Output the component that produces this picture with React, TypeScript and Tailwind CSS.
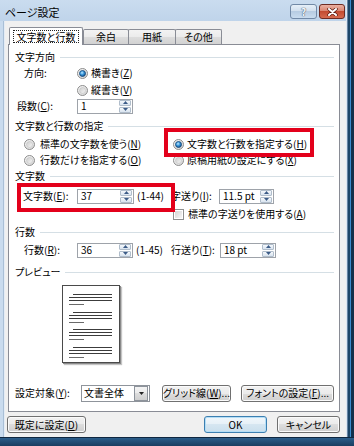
import React from "react";

const U = ({ k }: { k: string }) => <span className="underline underline-offset-1">{k}</span>;

function Radio({ checked }: { checked?: boolean }) {
  return (
    <svg width="11" height="11" viewBox="0 0 11 11" className="shrink-0 block">
      <defs>
        <linearGradient id="rOuter" x1="0" y1="0" x2="1" y2="1">
          <stop offset="0" stopColor="#fbfbfb" />
          <stop offset="1" stopColor="#d2d2d2" />
        </linearGradient>
        <linearGradient id="rInner" x1="0" y1="0" x2="1" y2="1">
          <stop offset="0" stopColor="#cdcdcd" />
          <stop offset="1" stopColor="#f6f6f6" />
        </linearGradient>
        <radialGradient id="rDot" cx="0.42" cy="0.38" r="0.65">
          <stop offset="0" stopColor="#c6ebff" />
          <stop offset="0.45" stopColor="#3f9de0" />
          <stop offset="1" stopColor="#0b4a86" />
        </radialGradient>
      </defs>
      <circle cx="5.5" cy="5.5" r="5" fill="url(#rOuter)" stroke="#8d8d8d" strokeWidth="1" />
      {checked ? (
        <circle cx="5.5" cy="5.5" r="3" fill="url(#rDot)" stroke="#174878" strokeWidth="0.8" />
      ) : (
        <circle cx="5.5" cy="5.5" r="3" fill="url(#rInner)" stroke="#c2c2c2" strokeWidth="0.6" />
      )}
    </svg>
  );
}

function Check() {
  return (
    <div className="w-[11px] h-[11px] shrink-0 border border-[#8e8f8f] bg-white p-[1px]">
      <div className="w-full h-full bg-gradient-to-br from-[#d4d4d4] to-[#f7f7f7]" />
    </div>
  );
}

function Spin() {
  return (
    <div className="flex flex-col w-[12px] mr-px gap-px shrink-0">
      <div className="flex-1 flex items-center justify-center bg-gradient-to-b from-[#f6f9fc] to-[#d8e3ef] border border-[#b0bdcb] rounded-[1px]">
        <svg width="5" height="3" viewBox="0 0 5 3" className="block">
          <path d="M0 3 L2.5 0 L5 3 Z" fill="#3b5b87" />
        </svg>
      </div>
      <div className="flex-1 flex items-center justify-center bg-gradient-to-b from-[#f6f9fc] to-[#d8e3ef] border border-[#b0bdcb] rounded-[1px]">
        <svg width="5" height="3" viewBox="0 0 5 3" className="block">
          <path d="M0 0 L2.5 3 L5 0 Z" fill="#3b5b87" />
        </svg>
      </div>
    </div>
  );
}

function NumBox({ value, w }: { value: string; w: string }) {
  return (
    <div className={`${w} h-[15px] shrink-0 border border-[#9ea3aa] bg-white flex items-stretch py-0`}>
      <span className="flex-1 pl-[3px] flex items-center">{value}</span>
      <Spin />
    </div>
  );
}

function Group({ label }: { label: string }) {
  return (
    <div className="flex items-center h-[16px] pl-[6px] pr-[5px]">
      <span>{label}</span>
      <div className="flex-1 h-px bg-[#d5dfe5] ml-[5px]" />
    </div>
  );
}

function Btn({ children, w }: { children: React.ReactNode; w: string }) {
  return (
    <div
      className={`${w} h-[17px] shrink-0 rounded-[3px] border border-[#707070] bg-[linear-gradient(#f2f2f2_0%,#ebebeb_50%,#dddddd_50%,#cfcfcf_100%)] shadow-[inset_0_0_0_1px_#fbfbfb] flex items-center justify-center`}
    >
      {children}
    </div>
  );
}

function PreviewPara({ mt }: { mt: string }) {
  return (
    <div className={`${mt} flex flex-col`}>
      <div className="ml-[4px] w-[39px] h-px bg-[#3c3c3c]" />
      <div className="mt-[2px] w-[43px] h-px bg-[#3c3c3c]" />
      <div className="mt-[2px] w-[43px] h-px bg-[#3c3c3c]" />
      <div className="mt-[3px] w-[15px] h-px bg-[#6a6a6a]" />
    </div>
  );
}

export default function App() {
  return (
    <div className="relative w-[354px] h-[446px] overflow-hidden flex flex-col bg-[#c5d8ec] text-black text-[10px] leading-none [font-family:'Noto_Sans_CJK_JP',sans-serif] [font-feature-settings:'palt']">
      <div className="flex h-[437px]">
        <div className="w-[346px] flex flex-col">
          {/* Title bar */}
          <div className="h-[21px] shrink-0 flex items-start bg-gradient-to-b from-[#cadcef] to-[#bfd4ea]">
            <div className="pl-[5px] pt-[7px] text-[11px]">ページ設定</div>
            <div className="ml-auto mr-px mt-[4px] flex gap-[2px]">
              <div className="w-[27px] h-[15px] rounded-[3px] border border-[#7189a6] bg-[linear-gradient(#e6eff8_0%,#d2e0ee_45%,#b7cce2_50%,#c9dcef_100%)] flex items-center justify-center">
                <span className="text-[10px] font-bold text-[#f4f7fb] [text-shadow:0_0_1px_#3d4f66,0_0_1px_#3d4f66]">?</span>
              </div>
              <div className="w-[26px] h-[15px] rounded-[3px] border border-[#6e2b22] bg-[linear-gradient(#eab0a2_0%,#da8672_45%,#c34b31_50%,#d66a4e_100%)] flex items-center justify-center">
                <svg width="11" height="8" viewBox="0 0 11 8" className="block">
                  <path d="M2 1 L9 7 M9 1 L2 7" stroke="#5a1a10" strokeWidth="3.4" strokeLinecap="round" />
                  <path d="M2 1 L9 7 M9 1 L2 7" stroke="#ffffff" strokeWidth="2" strokeLinecap="round" />
                </svg>
              </div>
            </div>
          </div>

          <div className="flex flex-1 min-h-0">
            {/* left frame */}
            <div className="w-[5px] flex">
              <div className="w-[3px] bg-[#c9dbee]" />
              <div className="w-px bg-[#a9bfd6]" />
              <div className="w-px bg-[#e4ecf5]" />
            </div>
            {/* client */}
            <div className="w-[341px] bg-[#f0f0f0] flex flex-col pt-[6px] pl-[3px]">
              {/* tabs */}
              <div className="flex items-end h-[17px]">
                <div className="relative z-10 ml-px w-[74px] h-[18px] -mb-px bg-white border border-b-0 border-[#898c95] rounded-t-[2px] flex items-center justify-center">
                  <span className="border border-dotted border-[#222] px-[3px] h-[13px] flex items-center">文字数と行数</span>
                </div>
                <div className="w-[46px] h-[15px] border border-b-0 border-[#898c95] rounded-t-[2px] bg-[linear-gradient(#f3f3f3_0%,#ebebeb_50%,#dddddd_50%,#d2d2d2_100%)] flex items-center justify-center">
                  余白
                </div>
                <div className="-ml-px w-[48px] h-[15px] border border-b-0 border-[#898c95] rounded-t-[2px] bg-[linear-gradient(#f3f3f3_0%,#ebebeb_50%,#dddddd_50%,#d2d2d2_100%)] flex items-center justify-center">
                  用紙
                </div>
                <div className="-ml-px w-[47px] h-[15px] border border-b-0 border-[#898c95] rounded-t-[2px] bg-[linear-gradient(#f3f3f3_0%,#ebebeb_50%,#dddddd_50%,#d2d2d2_100%)] flex items-center justify-center">
                  その他
                </div>
              </div>

              {/* panel */}
              <div className="w-[332px] h-[368px] border border-[#898c95] bg-white flex flex-col">
                <div className="mt-[4px]">
                  <Group label="文字方向" />
                </div>
                <div className="flex items-center h-[16px]">
                  <div className="w-[68px] pl-[15px]">方向:</div>
                  <Radio checked />
                  <span className="ml-[3px]">
                    横書き(<U k="Z" />)
                  </span>
                </div>
                <div className="flex items-center h-[16px] mt-px">
                  <div className="w-[68px]" />
                  <Radio />
                  <span className="ml-[3px]">
                    縦書き(<U k="V" />)
                  </span>
                </div>
                <div className="flex items-center h-[16px]">
                  <div className="w-[68px] pl-[8px]">
                    段数(<U k="C" />):
                  </div>
                  <NumBox value="1" w="w-[56px]" />
                </div>

                <div className="mt-[4px]">
                  <Group label="文字数と行数の指定" />
                </div>
                <div className="flex items-center h-[16px] mt-[2px]">
                  <div className="w-[164px] flex items-center pl-[15px]">
                    <Radio />
                    <span className="ml-[5px]">
                      標準の文字数を使う(<U k="N" />)
                    </span>
                  </div>
                  <Radio checked />
                  <span className="ml-[3px]">
                    文字数と行数を指定する(<U k="H" />)
                  </span>
                </div>
                <div className="flex items-center h-[16px]">
                  <div className="w-[164px] flex items-center pl-[15px]">
                    <Radio />
                    <span className="ml-[5px]">
                      行数だけを指定する(<U k="O" />)
                    </span>
                  </div>
                  <Radio />
                  <span className="ml-[3px]">
                    原稿用紙の設定にする(<U k="X" />)
                  </span>
                </div>

                <Group label="文字数" />
                <div className="flex items-center h-[16px] mt-[4px]">
                  <div className="w-[162px] flex items-center">
                    <div className="w-[68px] pl-[14px]">
                      文字数(<U k="E" />):
                    </div>
                    <NumBox value="37" w="w-[57px]" />
                    <span className="ml-[3px]">(1-44)</span>
                  </div>
                  <div className="w-[48px]">
                    字送り(<U k="I" />):
                  </div>
                  <NumBox value="11.5 pt" w="w-[55px]" />
                </div>
                <div className="flex items-center h-[16px] mt-[2px]">
                  <div className="w-[164px]" />
                  <Check />
                  <span className="ml-[4px]">
                    標準の字送りを使用する(<U k="A" />)
                  </span>
                </div>

                <div className="mt-[2px]">
                  <Group label="行数" />
                </div>
                <div className="flex items-center h-[16px] mt-[2px]">
                  <div className="w-[162px] flex items-center">
                    <div className="w-[68px] pl-[15px]">
                      行数(<U k="R" />):
                    </div>
                    <NumBox value="36" w="w-[56px]" />
                    <span className="ml-[3px]">(1-45)</span>
                  </div>
                  <div className="w-[49px]">
                    行送り(<U k="T" />):
                  </div>
                  <NumBox value="18 pt" w="w-[56px]" />
                </div>

                <div className="mt-[6px]">
                  <Group label="プレビュー" />
                </div>
                <div className="h-[104px] pl-[53px] pt-[5px]">
                  <div className="w-[58px] h-[78px] border border-[#4a4a4a] bg-white shadow-[1px_1px_0_#8a8a8a,2px_2px_1px_#c4c4c4] pl-[6px] flex flex-col">
                    <PreviewPara mt="mt-[8px]" />
                    <PreviewPara mt="mt-[7px]" />
                    <PreviewPara mt="mt-[6px]" />
                    <PreviewPara mt="mt-[7px]" />
                  </div>
                </div>

                <div className="flex items-center h-[18px]">
                  <div className="w-[72px] pl-[6px]">
                    設定対象(<U k="Y" />):
                  </div>
                  <div className="w-[69px] h-[17px] border border-[#8f949b] bg-white flex items-center">
                    <span className="flex-1 pl-[2px]">文書全体</span>
                    <div className="w-[14px] h-[15px] mr-px border border-[#8d939b] bg-[linear-gradient(#f3f3f3_0%,#ebebeb_50%,#dddddd_50%,#cfcfcf_100%)] flex items-center justify-center">
                      <svg width="5" height="3" viewBox="0 0 5 3" className="block">
                        <path d="M0 0 L2.5 3 L5 0 Z" fill="#222" />
                      </svg>
                    </div>
                  </div>
                  <div className="ml-[12px]">
                    <Btn w="w-[69px]">
                      グリッド線(<U k="W" />)...
                    </Btn>
                  </div>
                  <div className="ml-[10px]">
                    <Btn w="w-[93px]">
                      フォントの設定(<U k="F" />)...
                    </Btn>
                  </div>
                </div>
              </div>

              {/* bottom buttons */}
              <div className="flex h-[17px] mt-[4px] -ml-px mr-[6px]">
                <Btn w="w-[79px]">
                  既定に設定(<U k="D" />)
                </Btn>
                <div className="ml-auto w-[63px] h-[17px] rounded-[3px] border border-[#3c7fb1] bg-[linear-gradient(#f1f7fb_0%,#e6f0f7_50%,#d6e6f1_50%,#cadfed_100%)] shadow-[inset_0_0_0_1px_#b4def6] flex items-center justify-center">
                  OK
                </div>
                <div className="ml-[10px]">
                  <Btn w="w-[63px]">キャンセル</Btn>
                </div>
              </div>
            </div>
          </div>
        </div>
        {/* right frame */}
        <div className="flex-1 flex">
          <div className="w-px bg-[#dce7f2]" />
          <div className="w-px bg-[#6784a3]" />
          <div className="w-[2px] bg-[#1d4668]" />
          <div className="w-px bg-[#3b8bd0]" />
          <div className="flex-1 bg-[#12304c]" />
        </div>
      </div>
      {/* bottom frame */}
      <div className="flex-1 flex flex-col">
        <div className="h-px bg-[#0f2740]" />
        <div className="flex-1 bg-gradient-to-b from-[#2b5d8a] to-[#1a3d60]" />
      </div>

      {/* red annotation boxes */}
      <div className="absolute left-[164px] top-[128px] w-[150px] h-[29px] border-[4px] border-[#e3001b]" />
      <div className="absolute left-[17px] top-[183px] w-[158px] h-[29px] border-[4px] border-[#e3001b]" />
    </div>
  );
}
